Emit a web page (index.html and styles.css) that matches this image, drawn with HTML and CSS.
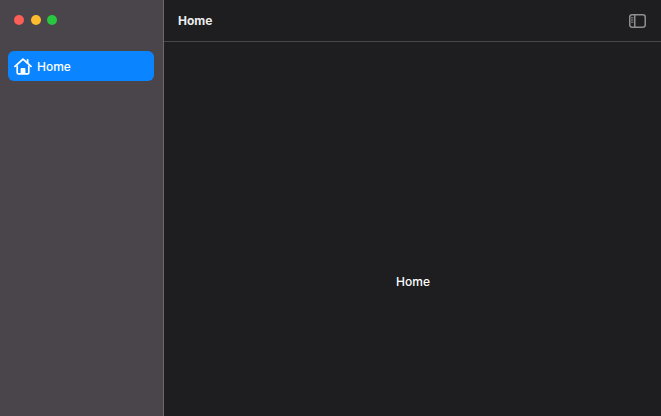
FILE: index.html
```html
<!DOCTYPE html>
<html lang="en">
<head>
    <meta charset="UTF-8">
    <meta name="viewport" content="width=device-width, initial-scale=1.0">
    <title>Home</title>
    <link rel="stylesheet" href="styles.css">
</head>
<body>
    <div class="window">
        <aside class="sidebar">
            <div class="traffic">
                <span class="light red"></span>
                <span class="light yellow"></span>
                <span class="light green"></span>
            </div>
            <div class="nav-item">
                <svg class="home-icon" width="18" height="17" viewBox="0 0 18 17" fill="none">
                    <path d="M1 8.4 9 1.2l8 7.2" stroke="#fff" stroke-width="1.8" stroke-linecap="round" stroke-linejoin="round"/>
                    <path d="M3.2 7.4v7.3c0 .7.4 1.1 1.1 1.1h9.4c.7 0 1.1-.4 1.1-1.1V7.4" stroke="#fff" stroke-width="1.7"/>
                    <path d="M6.6 15.5v-4.6c0-.5.3-.8.8-.8h3.2c.5 0 .8.3.8.8v4.6z" fill="#fff"/>
                    <path d="M13.6 1.8v3.4" stroke="#fff" stroke-width="1.8" stroke-linecap="round"/>
                </svg>
                <span>Home</span>
            </div>
        </aside>
        <main class="content">
            <header class="toolbar">
                <h1>Home</h1>
                <svg class="toggle" width="17" height="14" viewBox="0 0 17 14" fill="none">
                    <rect x="0.75" y="0.75" width="15.5" height="12.5" rx="2.4" stroke="#8e8e90" stroke-width="1.5"/>
                    <path d="M5.75 1v12" stroke="#8e8e90" stroke-width="1.5"/>
                    <path d="M2 3.8h2.4M2 6h2.4M2 8.2h2.4" stroke="#8e8e90" stroke-width="1"/>
                </svg>
            </header>
            <div class="detail">Home</div>
        </main>
    </div>
</body>
</html>
```

FILE: styles.css
```css
html, body {
    margin: 0;
    padding: 0;
    height: 100%;
}
body {
    font-family: 'Inter', 'Liberation Sans', sans-serif;
    background-color: #1e1e20;
    color: #fff;
    overflow: hidden;
}
.window {
    display: flex;
    height: 100vh;
}
.sidebar {
    width: 164px;
    flex-shrink: 0;
    box-sizing: border-box;
    padding: 0 9px 0 8px;
    background-color: #4a454a;
    border-right: 1px solid #6b686b;
}
.traffic {
    display: flex;
    gap: 6.5px;
    padding: 15px 0 0 6px;
    height: 36px;
}
.light {
    width: 10px;
    height: 10px;
    border-radius: 50%;
}
.red { background-color: #fc5f57; }
.yellow { background-color: #febb2e; }
.green { background-color: #28c73f; }
.nav-item {
    display: flex;
    align-items: center;
    gap: 5px;
    height: 30px;
    padding-left: 6px;
    background-color: #0a84ff;
    border-radius: 6px;
    font-size: 12px;
    font-weight: 500;
}
.content {
    flex: 1;
    display: flex;
    flex-direction: column;
    min-width: 0;
}
.toolbar {
    display: flex;
    align-items: center;
    justify-content: space-between;
    height: 41px;
    padding: 0 15px 0 14px;
    border-bottom: 1px solid #48484a;
}
.toolbar h1 {
    margin: 0;
    font-size: 12px;
    font-weight: 700;
    color: #ececec;
}
.detail {
    flex: 1;
    display: flex;
    align-items: center;
    justify-content: center;
    padding: 104px 0 0 1px;
    font-size: 12px;
    font-weight: 500;
}
```
